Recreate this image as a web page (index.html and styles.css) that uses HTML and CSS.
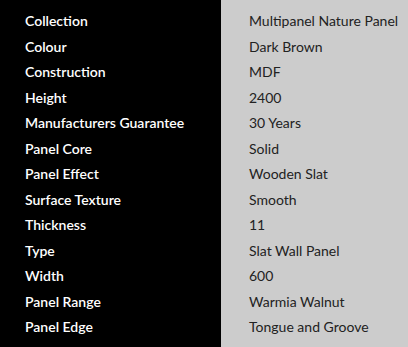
FILE: index.html
```html
<!DOCTYPE html>
<html>
<head>
<meta charset="utf-8">
<link rel="stylesheet" href="styles.css">
</head>
<body>
<dl class="specs">
<dt>Collection</dt><dd>Multipanel Nature Panel</dd>
<dt>Colour</dt><dd>Dark Brown</dd>
<dt>Construction</dt><dd>MDF</dd>
<dt>Height</dt><dd>2400</dd>
<dt>Manufacturers Guarantee</dt><dd>30 Years</dd>
<dt>Panel Core</dt><dd>Solid</dd>
<dt>Panel Effect</dt><dd>Wooden Slat</dd>
<dt>Surface Texture</dt><dd>Smooth</dd>
<dt>Thickness</dt><dd>11</dd>
<dt>Type</dt><dd>Slat Wall Panel</dd>
<dt>Width</dt><dd>600</dd>
<dt>Panel Range</dt><dd>Warmia Walnut</dd>
<dt>Panel Edge</dt><dd>Tongue and Groove</dd>
</dl>
</body>
</html>
```
FILE: styles.css
```css
html, body {
  margin: 0;
  padding: 0;
  font-family: Lato, "Open Sans", sans-serif;
  font-size: 14px;
}
.specs {
  margin: 0;
  width: 408px;
  height: 347px;
  box-sizing: border-box;
  padding-top: 8px;
  display: grid;
  grid-template-columns: 221px 1fr;
  grid-auto-rows: 25.5px;
  align-content: start;
  background: linear-gradient(to right, #000 221px, #cccccc 221px);
}
.specs dt {
  color: #fff;
  font-weight: 600;
  padding-left: 25px;
  display: flex;
  align-items: center;
}
.specs dd {
  margin: 0;
  color: #222;
  padding-left: 28px;
  display: flex;
  align-items: center;
}
```
